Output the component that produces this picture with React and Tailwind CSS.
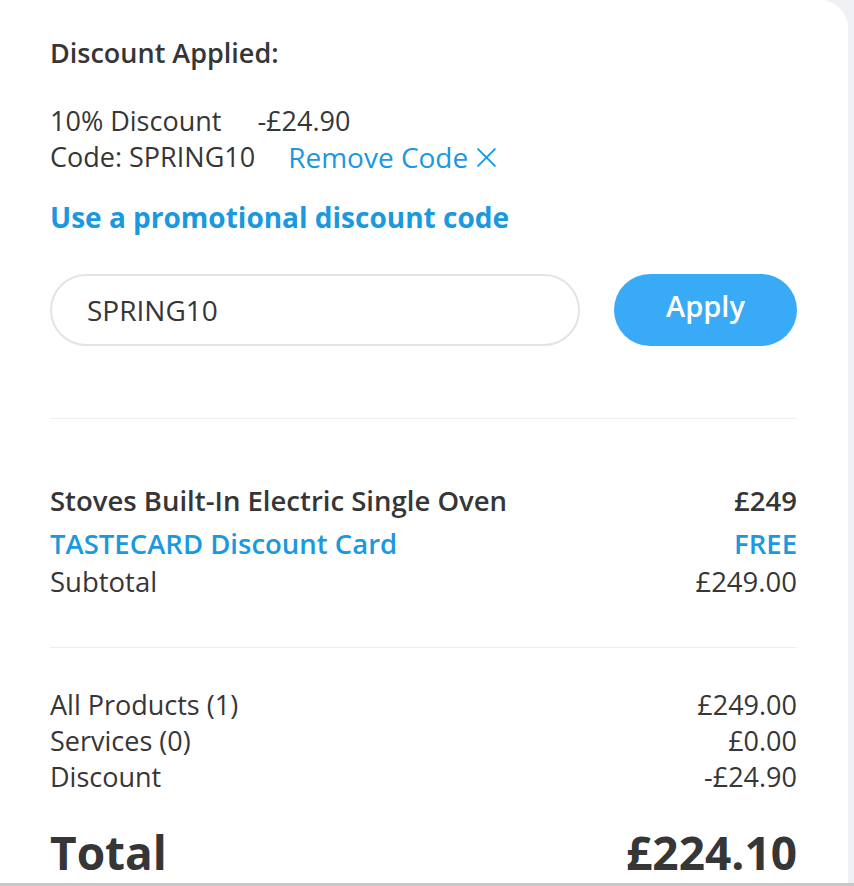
export default function App() {
  const font = { fontFamily: '"Open Sans", "Noto Sans", sans-serif' };
  return (
    <div className="w-[854px] h-[886px] flex flex-col bg-[#eef0f4] text-[#363636]" style={font}>
      <div className="flex flex-1 min-h-0">
        <div className="flex-1 bg-white rounded-tr-[28px] pl-[50px] pr-[51px] pt-[35px] flex flex-col">
          <div className="text-[27px] leading-[36px] font-semibold">Discount Applied:</div>

          <div className="mt-[32px] flex text-[27px] leading-[36px]">
            <span>10% Discount</span>
            <span className="ml-[36px]">-£24.90</span>
          </div>
          <div className="flex items-center text-[27px] leading-[36px]">
            <span>Code: <span className="font-medium">SPRING10</span></span>
            <span className="ml-[33px] text-[28px] text-[#1a98e0] flex items-center">
              Remove Code
              <svg className="ml-[8px]" width="21" height="21" viewBox="0 0 20 20" fill="none" stroke="#1a98e0" strokeWidth="1.8" strokeLinecap="round">
                <path d="M2 2 L18 18 M18 2 L2 18" />
              </svg>
            </span>
          </div>

          <div className="mt-[24px] text-[28px] leading-[36px] font-bold text-[#1a98e0]">
            Use a promotional discount code
          </div>

          <div className="mt-[39px] flex items-center gap-[34px]">
            <div className="w-[530px] h-[72px] rounded-full border-2 border-[#e3e3e3] flex items-center pl-[35px] text-[28px]">
              SPRING10
            </div>
            <button className="flex-1 h-[72px] rounded-full bg-[#38aaf6] text-white text-[29px] font-semibold flex items-center justify-center pb-[8px]">
              Apply
            </button>
          </div>

          <div className="mt-[72px] h-px bg-[#eeeeee]" />

          <div className="mt-[64px] flex justify-between text-[27.5px] leading-[36px] font-semibold">
            <span>Stoves Built-In Electric Single Oven</span>
            <span>£249</span>
          </div>
          <div className="mt-[7px] flex justify-between text-[27.5px] leading-[36px] font-semibold text-[#1a98e0]">
            <span>TASTECARD Discount Card</span>
            <span>FREE</span>
          </div>
          <div className="mt-[2px] flex justify-between text-[27.5px] leading-[36px]">
            <span>Subtotal</span>
            <span>£249.00</span>
          </div>

          <div className="mt-[47px] h-px bg-[#eeeeee]" />

          <div className="mt-[39px] flex justify-between text-[27px] leading-[36px]">
            <span>All Products (1)</span>
            <span>£249.00</span>
          </div>
          <div className="flex justify-between text-[27px] leading-[36px]">
            <span>Services (0)</span>
            <span>£0.00</span>
          </div>
          <div className="flex justify-between text-[27px] leading-[36px]">
            <span>Discount</span>
            <span>-£24.90</span>
          </div>

          <div className="mt-[29px] flex justify-between text-[46px] leading-[56px] font-bold">
            <span>Total</span>
            <span>£224.10</span>
          </div>
        </div>
        <div className="w-[6px]" />
      </div>
      <div className="h-[3px] bg-[#c8c8c8]" />
    </div>
  );
}
